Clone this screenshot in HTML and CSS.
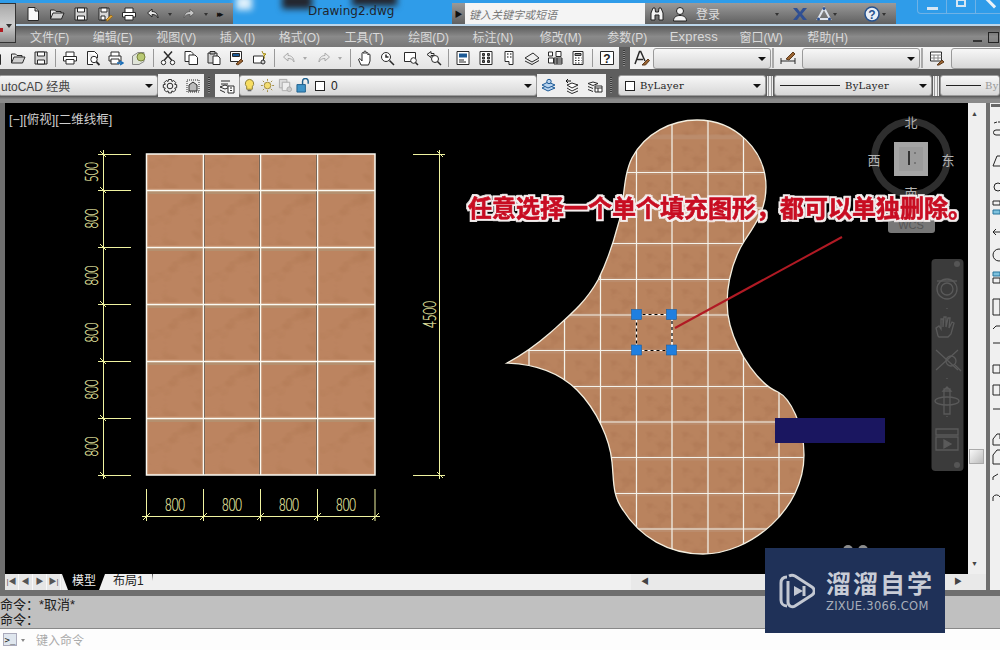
FILE: index.html
```html
<!DOCTYPE html>
<html lang="zh">
<head>
<meta charset="utf-8">
<title>Drawing2.dwg</title>
<link rel="stylesheet" href="styles.css">
</head>
<body>
<svg class="defs" width="0" height="0">
  <defs>
    <g id="i-new"><path d="M3 1.500h7l3.500 3.500v9.500H3z" fill="#fafafa"/><path d="M10 1.500V5h3.500" fill="#bbb"/></g>
    <g id="i-open"><path d="M1.500 13V4h4l1.500 1.500H12V7" fill="#e8e8e8"/><path d="M1.500 13l2.500-6h11l-2.500 6z" fill="#cfcfcf"/></g>
    <g id="i-save"><path d="M2 2h12v12H2z" fill="#d8d8d8"/><path d="M4.500 2h7v4h-7zM4.500 10h7v4h-7z" fill="#fff"/></g>
    <g id="i-saveas"><path d="M2 2h10v12H2z" fill="#d8d8d8"/><path d="M4 2h6v4H4zM4 10h4v4H4z" fill="#fff"/><path d="M9 14l5-5 1.500 1.500-5 4.500z" fill="#e2a93c" stroke="#9a6c1c"/></g>
    <g id="i-print"><path d="M4 6V2h8v4M4 11H1.500V6.500h13V11H12" fill="#fff"/><path d="M4 9.500h8V14H4z" fill="#fff"/></g>
    <g id="i-undo"><path d="M7 3L2.500 7 7 11V8.500c3 0 5 1 6 3.500 0-4-2.500-6.500-6-6.500z" fill="#e6e6e6"/></g>
    <g id="i-redo"><path d="M9 3l4.500 4L9 11V8.500c-3 0-5 1-6 3.500 0-4 2.500-6.500 6-6.500z" fill="#e6e6e6"/></g>
    <g id="i-prev"><path d="M2.500 1.500h7l3 3V8M8 14.500H2.500v-13" fill="#fff"/><circle cx="9" cy="9.500" r="3.200" fill="#fff"/><path d="M11.500 12l3 3" stroke-width="1.800"/></g>
    <g id="i-plot"><path d="M3 6V2h8v4M3 11H1V6h12v5h-2" fill="#fff"/><path d="M3 9h8v5H3z" fill="#fff"/><path d="M9 13h5m-2-2l3 2-3 2" stroke="#1c6fb8" stroke-width="1.500" fill="none"/></g>
    <g id="i-3d"><path d="M1.500 6L7 2.500h6v9L8 14.500H1.500z" fill="#dfe4d8" stroke="#888"/><circle cx="10" cy="7" r="4" fill="#b9c974" stroke="#77823c"/></g>
    <g id="i-cut"><path d="M4 1.500l8 9M12 1.500l-8 9" stroke-width="1.500"/><circle cx="3.500" cy="12.500" r="2.200" fill="#fff"/><circle cx="12.500" cy="12.500" r="2.200" fill="#fff"/></g>
    <g id="i-copy"><path d="M2 1.500h6l2 2v8H2z" fill="#fff"/><path d="M6 5h6l2.500 2.500v7H6z" fill="#fff"/></g>
    <g id="i-paste"><path d="M2 3h9v10H2z" fill="#d4d4d4"/><path d="M4 1.500h5V4H4z" fill="#bbb"/><path d="M7 6h5l2 2v6.500H7z" fill="#fff"/></g>
    <g id="i-match"><path d="M1.500 1.500h11v10h-11z" fill="#fff"/><path d="M3.500 3.500h7v3h-7z" fill="#1c5a96"/><path d="M7 14l5-5 2 2-5 4z" fill="#9a6433" stroke="#5e3b1c"/></g>
    <g id="i-block"><path d="M1.500 6h10v7h-10z" fill="#fff"/><circle cx="11" cy="12" r="2" fill="#ccc"/><path d="M10 1l1 2.500 3 .5-2 2 .5 2.500" fill="#e8cf4a" stroke="#a08a1c"/></g>
    <g id="i-pan"><path d="M4 15l-2.500-5.500 1.500-1L5 11V3.500a1 1 0 012 0V2a1 1 0 012 0v1.500a1 1 0 012 0V5a1 1 0 012 0v6l-1.500 4z" fill="#fff"/></g>
    <g id="i-zr"><circle cx="6" cy="7" r="4.500" fill="#fff"/><path d="M6 4.500V7h2.500M9.500 10.500l4.500 4.500" stroke-width="1.500"/></g>
    <g id="i-zw"><path d="M1.500 2.500h11v9h-11z" fill="#fff"/><circle cx="10.500" cy="10.500" r="2.800" fill="#fff"/><path d="M12.500 12.500l2.500 2.500" stroke-width="1.500"/></g>
    <g id="i-zp"><path d="M5 1.500L1 4.500l4 3V5.500h3V3.500H5z" fill="#eee"/><circle cx="9" cy="9" r="3.500" fill="#fff"/><path d="M11.500 11.500l3.500 3.500" stroke-width="1.500"/></g>
    <g id="i-prop"><path d="M2 1.500h12v13H2z" fill="#fff"/><path d="M4 3.500h8v4H4z" fill="#1c5a96" stroke="none"/><path d="M4 10h5m-5 2h7"/></g>
    <g id="i-dc"><path d="M2 1.500h12v13H2z" fill="#fff"/><path d="M4.500 3.500h2v2h-2zM9.500 3.500h2v2h-2zM4.500 7h2v2h-2zM9.500 7h2v2h-2zM4.500 10.500h2v2h-2zM9.500 10.500h2v2h-2z" fill="#666"/></g>
    <g id="i-pal"><path d="M4 1.500h8v13H8v-3H4z" fill="#fff"/><path d="M6 4h1.500M9 4h1.500M6 7h1.500M9 7h1.500" stroke="#555" stroke-width="1.500"/></g>
    <g id="i-mk"><path d="M1 8l8-5 6 5-7 4z" fill="#eee"/><path d="M1 11l7 3.500 7-4"/></g>
    <g id="i-sheet"><path d="M1.500 2h4v4h-4zM9 1.500h5v5H9zM1.500 8h5v5h-5z" fill="#fff"/><path d="M7 8h8v6H7z" fill="#ddd"/><path d="M7 10h8M7 12h8M10 8v6"/></g>
    <g id="i-calc"><path d="M3 1.500h10v13H3z" fill="#fff"/><path d="M5 3.500h6v2H5z" fill="#999"/><path d="M5 8h1.500M8 8h1.500M11 8h.5M5 10.500h1.500M8 10.500h1.500M11 10.500h.5M5 13h1.500M8 13h1.500M11 13h.5" stroke-width="1.200"/></g>
    <g id="i-help"><path d="M1.500 1.500h13v13h-13z" fill="#fff"/><text x="8" y="12.500" class="help-q">?</text></g>
    <g id="i-tstyle"><path d="M1 14L5.500 1.500h1.200L11 11M3 9.500h6" stroke-width="1.500"/><path d="M8 15l6-6 1.500 1.500-4 4.500z" fill="#9a6433" stroke="#5e3b1c"/></g>
    <g id="i-dstyle"><path d="M1 8v6M15 8v6M1 11h14" stroke-width="1"/><path d="M6 9l7-7 2 2-6 6z" fill="#9a6433" stroke="#5e3b1c"/></g>
    <g id="i-tbl"><path d="M1.500 2h11v9h-11z" fill="#fff"/><path d="M1.500 5h11M1.500 8h11M5 5v6M9 5v6" stroke="#888"/><path d="M8 15l5-5 2 2-5 3z" fill="#9a6433" stroke="#5e3b1c"/></g>
    <g id="i-gear"><circle cx="8" cy="8" r="2.800" fill="none"/><path d="M6.500 1.500h3l.4 2 1.800-1 2 2-1 1.800 2 .4v3l-2 .4 1 1.800-2 2-1.800-1-.4 2h-3l-.4-2-1.800 1-2-2 1-1.800-2-.4v-3l2-.4-1-1.800 2-2 1.800 1z" fill="none"/></g>
    <g id="i-ws"><path d="M2 2h12v12H2z" fill="none" stroke-dasharray="1 1"/><path d="M4 7l4-3 4 3v6H4z" fill="#bbb"/></g>
    <g id="i-layer"><path d="M2 3h9M2 6h7M1 9l5-2 5 2-5 2z" fill="#fff"/><path d="M1 12l5 2.500"/><path d="M9 8h6v7H9z" fill="#fff"/><path d="M11 10h2m-2 2.500h2"/></g>
    <g id="i-bulb"><path d="M8 1.500a4.500 4.500 0 013 7.800V12H5V9.300A4.500 4.500 0 018 1.500z" fill="#f7dd62" stroke="#8a7a2c"/><path d="M6 13.500h4" stroke="#666" stroke-width="1.500"/></g>
    <g id="i-sun"><circle cx="8" cy="8" r="3.500" fill="#f3dd73" stroke="#a08a3c"/><path d="M8 1v2M8 13v2M1 8h2M13 8h2M3 3l1.500 1.500M11.500 11.500L13 13M13 3l-1.500 1.500M3 13l1.500-1.500" stroke="#a08a3c"/></g>
    <g id="i-fr"><path d="M1.500 1.500h8v9h-8z" fill="#ddd" stroke="#aaa"/><path d="M4.500 4.500h8v9h-8z" fill="#eee" stroke="#aaa"/><circle cx="12" cy="12" r="2.500" fill="#ccc" stroke="#aaa"/></g>
    <g id="i-lock"><path d="M1 7h9v8H1z" fill="#3f94c8" stroke="#1e5f8c"/><path d="M7 7V3.500a3 3 0 016 0V6" fill="none" stroke="#1e5f8c" stroke-width="1.500"/></g>
    <g id="i-lc"><path d="M1 10l6-3 7 3-7 3z" fill="#b8d3ee" stroke="#1c5a96"/><path d="M1 7l6-3 7 3-7 3z" fill="#b8d3ee" stroke="#1c5a96"/><circle cx="8" cy="3.500" r="2.200" fill="#b8d3ee" stroke="#1c5a96"/></g>
    <g id="i-lp"><path d="M3 7l5-2 6 2-6 3zM3 10l5 3 6-3M3 13l5 2.500 6-2.500" fill="#fff"/><path d="M7 3H2m2-2L2 3l2 2" stroke="#111"/></g>
    <g id="i-find"><path d="M1 5.500L6 4l5 1.500L6 7.500zM1 8.500l5 2M1 11.500l5 2" fill="#fff"/><path d="M8 8h7v6H8z" fill="#fff"/><path d="M8 10h7M11 10v4"/></g>
    <pattern id="tile-a" patternUnits="userSpaceOnUse" x="146.500" y="133" width="57" height="57">
      <rect width="57" height="57" fill="#c18a66"/>
      <rect y="0" width="57" height="4" fill="#b4906f"/>
      <rect x="2" y="4" width="53" height="51" fill="#bc8460"/>
      <rect x="2" y="4" width="53" height="51" filter="url(#grain)" opacity=".4"/>
    </pattern>
    <pattern id="tile-b" patternUnits="userSpaceOnUse" x="529" y="172" width="35.700" height="35.700">
      <rect width="35.700" height="35.700" fill="#bb8c6c"/>
      <rect x="1" y="3" width="34" height="31" fill="#b9835e"/>
      <rect x="1" y="3" width="34" height="31" filter="url(#grain2)" opacity=".4"/>
    </pattern>
    <filter id="grain" x="0" y="0" width="100%" height="100%" color-interpolation-filters="sRGB">
      <feTurbulence type="fractalNoise" baseFrequency=".04 .06" numOctaves="3" seed="4"/>
      <feColorMatrix values="0 0 0 0 .62  0 0 0 0 .4  0 0 0 0 .25  0 0 0 2 -.9"/>
    </filter>
    <filter id="grain2" x="0" y="0" width="100%" height="100%" color-interpolation-filters="sRGB">
      <feTurbulence type="fractalNoise" baseFrequency=".07 .1" numOctaves="3" seed="9"/>
      <feColorMatrix values="0 0 0 0 .6  0 0 0 0 .38  0 0 0 0 .25  0 0 0 2 -.9"/>
    </filter>
    <filter id="outline" x="-2%" y="-20%" width="104%" height="140%" color-interpolation-filters="sRGB">
      <feMorphology in="SourceAlpha" operator="dilate" radius="1.500" result="wide"/>
      <feFlood flood-color="#f4eeee"/>
      <feComposite in2="wide" operator="in" result="halo"/>
      <feMerge><feMergeNode in="halo"/><feMergeNode in="SourceGraphic"/></feMerge>
    </filter>
  </defs>
</svg>

<div class="app">
  <header class="titlebar">
    <div class="blur-patch"></div>
    <div class="blur-patch patch-b"></div>
    <div class="blur-patch patch-w"></div>
    <div class="app-btn"><span class="app-dot"></span><span class="app-caret"></span></div>
    <div class="qat">
      <svg class="ic" viewBox="0 0 16 16"><use href="#i-new"/></svg>
      <svg class="ic" viewBox="0 0 16 16"><use href="#i-open"/></svg>
      <svg class="ic" viewBox="0 0 16 16"><use href="#i-save"/></svg>
      <svg class="ic" viewBox="0 0 16 16"><use href="#i-saveas"/></svg>
      <svg class="ic" viewBox="0 0 16 16"><use href="#i-print"/></svg>
      <svg class="ic" viewBox="0 0 16 16"><use href="#i-undo"/></svg>
      <span class="caret-s"></span>
      <svg class="ic dim" viewBox="0 0 16 16"><use href="#i-redo"/></svg>
      <span class="caret-s"></span>
      <span class="more">▸▸</span>
    </div>
    <div class="doc-title">Drawing2.dwg</div>
    <div class="infobar">
      <span class="info-arrow">▶</span>
      <div class="search">键入关键字或短语</div>
      <div class="info-tools">
        <svg class="ic-b" viewBox="0 0 16 16"><path d="M2 14V7l2-5h2l.5 4h3L10 2h2l2 5v7h-4V9H6v5z" fill="#f4f4f4" stroke="#222"/></svg>
        <svg class="ic-b" viewBox="0 0 16 16"><circle cx="8" cy="5" r="3.500" fill="#f4f4f4" stroke="#222"/><path d="M1.500 15c0-4 3-5.500 6.500-5.500s6.500 1.500 6.500 5.500z" fill="#f4f4f4" stroke="#222"/></svg>
        <span class="login">登录</span>
        <span class="caret-s login-caret"></span>
        <svg class="ic-b gap-x" viewBox="0 0 16 16"><path d="M1 2h4l3 4 3-4h4l-5 6 5 6h-4l-3-4-3 4H1l5-6z" fill="#2f4f93"/></svg>
        <svg class="ic-b gap-a" viewBox="0 0 16 16"><path d="M8 2l6 11H2z" fill="none" stroke="#dfe5ee" stroke-width="2"/><circle cx="8" cy="2.500" r="1.500" fill="#2b4f8f"/><circle cx="2.500" cy="13" r="1.500" fill="#2b4f8f"/><circle cx="13.500" cy="13" r="1.500" fill="#2b4f8f"/></svg>
        <span class="caret-s"></span>
        <svg class="ic-b gap-b" viewBox="0 0 16 16"><circle cx="8" cy="8" r="7" fill="#e8eef6" stroke="#27528f" stroke-width="1.500"/><text x="8" y="12.500" class="help-b">?</text></svg>
        <span class="caret-s"></span>
      </div>
    </div>
    <div class="winbtns"><span class="wb"><i class="wb-min"></i></span><span class="wb"><i class="wb-max"></i></span><span class="wb wb-x"><i class="wb-cross"></i></span></div>
  </header>

  <nav class="menubar">
    <span>文件(F)</span><span>编辑(E)</span><span>视图(V)</span><span>插入(I)</span><span>格式(O)</span><span class="m1">工具(T)</span><span class="m1">绘图(D)</span><span>标注(N)</span><span class="m3">修改(M)</span><span class="m2">参数(P)</span><span class="m-ex">Express</span><span class="m-w">窗口(W)</span><span class="m1">帮助(H)</span>
    <div class="mdi"><i class="mdi-min"></i><i class="mdi-max"></i></div>
  </nav>

  <div class="toolbar tb1">
    <svg class="ti cut-l" viewBox="0 0 16 16"><use href="#i-new"/></svg>
    <svg class="ti" viewBox="0 0 16 16"><use href="#i-open"/></svg>
    <svg class="ti" viewBox="0 0 16 16"><use href="#i-save"/></svg>
    <i class="sep"></i>
    <svg class="ti" viewBox="0 0 16 16"><use href="#i-print"/></svg>
    <svg class="ti" viewBox="0 0 16 16"><use href="#i-prev"/></svg>
    <svg class="ti" viewBox="0 0 16 16"><use href="#i-plot"/></svg>
    <svg class="ti" viewBox="0 0 16 16"><use href="#i-3d"/></svg>
    <i class="sep"></i>
    <svg class="ti" viewBox="0 0 16 16"><use href="#i-cut"/></svg>
    <svg class="ti" viewBox="0 0 16 16"><use href="#i-copy"/></svg>
    <svg class="ti" viewBox="0 0 16 16"><use href="#i-paste"/></svg>
    <svg class="ti" viewBox="0 0 16 16"><use href="#i-match"/></svg>
    <svg class="ti" viewBox="0 0 16 16"><use href="#i-block"/></svg>
    <i class="sep"></i>
    <svg class="ti off" viewBox="0 0 16 16"><use href="#i-undo"/></svg><span class="caret-t"></span>
    <svg class="ti off" viewBox="0 0 16 16"><use href="#i-redo"/></svg><span class="caret-t"></span>
    <i class="sep"></i>
    <svg class="ti" viewBox="0 0 16 16"><use href="#i-pan"/></svg>
    <svg class="ti" viewBox="0 0 16 16"><use href="#i-zr"/></svg>
    <svg class="ti" viewBox="0 0 16 16"><use href="#i-zw"/></svg>
    <svg class="ti" viewBox="0 0 16 16"><use href="#i-zp"/></svg>
    <i class="sep"></i>
    <svg class="ti" viewBox="0 0 16 16"><use href="#i-prop"/></svg>
    <svg class="ti" viewBox="0 0 16 16"><use href="#i-dc"/></svg>
    <svg class="ti" viewBox="0 0 16 16"><use href="#i-pal"/></svg>
    <svg class="ti" viewBox="0 0 16 16"><use href="#i-mk"/></svg>
    <svg class="ti" viewBox="0 0 16 16"><use href="#i-sheet"/></svg>
    <svg class="ti" viewBox="0 0 16 16"><use href="#i-calc"/></svg>
    <i class="sep"></i>
    <svg class="ti" viewBox="0 0 16 16"><use href="#i-help"/></svg>
    <span class="grip grip-a"></span>
    <div class="tgroup tg-a"><svg class="ti" viewBox="0 0 16 16"><use href="#i-tstyle"/></svg></div>
    <div class="combo c-text"><b class="arrow"></b></div>
    <i class="vdiv"></i>
    <svg class="ti ti-s" viewBox="0 0 16 16"><use href="#i-dstyle"/></svg>
    <div class="combo c-text"><b class="arrow"></b></div>
    <i class="vdiv"></i>
    <svg class="ti ti-s" viewBox="0 0 16 16"><use href="#i-tbl"/></svg>
    <div class="combo c-rest"></div>
  </div>

  <div class="toolbar tb2">
    <div class="combo c-ws"><span class="ws-name">utoCAD 经典</span><b class="arrow"></b></div>
    <div class="tgroup">
      <svg class="ti" viewBox="0 0 16 16"><use href="#i-gear"/></svg>
      <svg class="ti" viewBox="0 0 16 16"><use href="#i-ws"/></svg>
    </div>
    <span class="grip grip-b"></span>
    <div class="tgroup tg-l"><svg class="ti" viewBox="0 0 16 16"><use href="#i-layer"/></svg></div>
    <div class="combo c-layer">
      <svg class="st" viewBox="0 0 16 16"><use href="#i-bulb"/></svg>
      <svg class="st" viewBox="0 0 16 16"><use href="#i-sun"/></svg>
      <svg class="st" viewBox="0 0 16 16"><use href="#i-fr"/></svg>
      <svg class="st" viewBox="0 0 16 16"><use href="#i-lock"/></svg>
      <i class="swatch"></i><span class="layer-name">0</span>
      <b class="arrow"></b>
    </div>
    <div class="tgroup">
      <svg class="ti" viewBox="0 0 16 16"><use href="#i-lc"/></svg>
      <svg class="ti" viewBox="0 0 16 16"><use href="#i-lp"/></svg>
      <svg class="ti" viewBox="0 0 16 16"><use href="#i-find"/></svg>
    </div>
    <span class="grip grip-c"></span>
    <div class="combo c-by1"><i class="swatch"></i><span class="by">ByLayer</span><b class="arrow"></b></div>
    <i class="vdiv dbl"></i>
    <div class="combo c-by2"><i class="ln"></i><span class="by">ByLayer</span><b class="arrow"></b></div>
    <i class="vdiv dbl"></i>
    <div class="combo c-by3"><i class="ln ln-s"></i><span class="by by-dim">ByL</span></div>
  </div>

  <div class="frame-top"></div>

  <div class="workspace">
    <div class="main">
      <div class="canvas-row">
        <div class="canvas">
          <span class="viewlabel">[−][俯视][二维线框]</span>
          <svg class="drawing" viewBox="5 103 963 471" width="963" height="471">
            <g class="left-draw">
              <rect x="146.500" y="154" width="228.500" height="321" fill="url(#tile-a)"/>
              <path class="bl" d="M259.500 154V475M316.500 154V475M204.500 154V475"/>
              <path class="wl wl-a" d="M146.500 154H375V475H146.500ZM203.500 154V475M260.500 154V475M317.500 154V475M146.500 190.500H375M146.500 247.500H375M146.500 304.500H375M146.500 361.500H375M146.500 418.500H375"/>
            </g>
            <g class="dims">
              <path d="M103.500 150V479M98 154.500h33M98 190.500h33M98 247.500h33M98 304.500h33M98 361.500h33M98 418.500h33M98 475.500h33"/>
              <path d="M100 151l6 6M100 187l6 6M100 244l6 6M100 301l6 6M100 358l6 6M100 415l6 6M100 472l6 6"/>
              <path d="M439.500 150V479M413 154.500h32M413 475.500h32M437 151l6 6M437 472l6 6"/>
              <path d="M142 516.500H380M146.500 489v32M203.500 489v32M260.500 489v32M317.500 489v32M375 489v32"/>
              <path d="M143 520l7-7M200 520l7-7M257 520l7-7M314 520l7-7M372 520l7-7"/>
            </g>
            <g class="dimtext">
              <text transform="translate(98 172) rotate(-90)" textLength="20" lengthAdjust="spacingAndGlyphs">500</text>
              <text transform="translate(98 218.500) rotate(-90)" textLength="20" lengthAdjust="spacingAndGlyphs">800</text>
              <text transform="translate(98 275.500) rotate(-90)" textLength="20" lengthAdjust="spacingAndGlyphs">800</text>
              <text transform="translate(98 332.500) rotate(-90)" textLength="20" lengthAdjust="spacingAndGlyphs">800</text>
              <text transform="translate(98 389.500) rotate(-90)" textLength="20" lengthAdjust="spacingAndGlyphs">800</text>
              <text transform="translate(98 446.500) rotate(-90)" textLength="20" lengthAdjust="spacingAndGlyphs">800</text>
              <text transform="translate(436 314.500) rotate(-90)" textLength="27" lengthAdjust="spacingAndGlyphs">4500</text>
              <text x="175" y="511" textLength="20" lengthAdjust="spacingAndGlyphs">800</text>
              <text x="232" y="511" textLength="20" lengthAdjust="spacingAndGlyphs">800</text>
              <text x="289" y="511" textLength="20" lengthAdjust="spacingAndGlyphs">800</text>
              <text x="346" y="511" textLength="20" lengthAdjust="spacingAndGlyphs">800</text>
            </g>

            <path class="blob" d="M697 120C672 120 645 133 632 158C622 178 625 205 618 225C612 248 607 262 598 280C586 302 570 315 550 333C535 346 522 355 507 363C535 364 560 373 577 390C597 410 610 440 612 462C614 480 612 495 623 510C640 537 668 554 703 554C750 554 804 510 804 455C804 425 790 398 778 392C760 385 738 355 730 325C722 295 732 260 745 240C755 225 766 210 766 187C766 150 735 120 697 120Z"/>
            <clipPath id="blob-clip"><path d="M697 120C672 120 645 133 632 158C622 178 625 205 618 225C612 248 607 262 598 280C586 302 570 315 550 333C535 346 522 355 507 363C535 364 560 373 577 390C597 410 610 440 612 462C614 480 612 495 623 510C640 537 668 554 703 554C750 554 804 510 804 455C804 425 790 398 778 392C760 385 738 355 730 325C722 295 732 260 745 240C755 225 766 210 766 187C766 150 735 120 697 120Z"/></clipPath>
            <path class="wl" clip-path="url(#blob-clip)" d="M529 110V560M564.500 110V560M600.500 110V560M636.500 110V560M672 110V560M708 110V560M743.500 110V560M779 110V560M500 172.500H810M500 208H810M500 243.500H810M500 279.500H810M500 315H810M500 350.500H810M500 386.500H810M500 422H810M500 457.500H810M500 493.500H810M500 529H810"/>

            <path class="sel-solid" d="M636.500 314.500H672V350.500H636.500Z"/>
            <path class="sel-dash" d="M636.500 314.500H672V350.500H636.500Z"/>
            <g class="grips">
              <rect x="631.500" y="309.500" width="10" height="10"/>
              <rect x="666.500" y="309.500" width="10" height="10"/>
              <rect x="631.500" y="345" width="10" height="10"/>
              <rect x="666.500" y="345" width="10" height="10"/>
            </g>

            <rect class="navy" x="775" y="418" width="110" height="25"/>
            <path class="leader" d="M675 328L842 237"/>

            <g class="viewcube">
              <circle cx="911" cy="158" r="36.500"/>
              <rect x="894" y="142" width="34" height="34"/>
              <rect class="cube-in" x="899" y="147" width="24" height="24"/>
              <path d="M909 151v14" class="cube-k"/>
              <path d="M914 153h2M914 163h2" class="cube-g"/>
              <text x="911" y="127">北</text><text x="874" y="165">西</text><text x="948" y="165">东</text><text x="911" y="198">南</text>
            </g>
            <rect class="wcs" x="888" y="218" width="47" height="15" rx="3"/>
            <text class="wcs-t" x="911" y="229">WCS</text>
            <text class="callout" x="468" y="217">任意选择一个单个填充图形，都可以单独删除。</text>

            <g class="navbar">
              <rect x="931.500" y="259" width="32" height="212" rx="4"/>
              <circle class="nb-dot" cx="957" cy="264" r="3"/>
              <circle class="nb-dot" cx="957" cy="465" r="3"/>
              <g class="nb-ic">
                <circle cx="947" cy="289" r="10"/><circle cx="947" cy="289" r="6"/><path d="M937 281h20"/>
                <path d="M938 336l-2-8 3-2 2 3 0-10 2 0 0 8 1-10 2 0 0 10 2-9 2 0-1 10 3-6 2 1-3 11-3 3h-9z"/>
                <path d="M936 350l22 20M958 350l-22 20"/><circle cx="951" cy="361" r="5"/><path d="M955 365l6 6"/>
                <path d="M944 389h6v25h-6zM947 387l-4 4h8z"/><ellipse cx="947" cy="401" rx="12" ry="4"/>
                <path d="M936 429h22v6h-22zM936 437h22v13h-22z"/><path class="nb-fill" d="M944 440l7 4-7 4z"/>
                <path d="M947 308v1M947 378v1M947 416v1"/>
              </g>
            </g>
            <circle class="nb-mark" cx="848" cy="550" r="5"/><circle class="nb-mark" cx="863" cy="550" r="5"/>
          </svg>
        </div>
        <div class="vscroll"><span class="up">▲</span><span class="thumb"></span><span class="dn">▼</span></div>
      </div>
      <div class="tabrow">
        <div class="tabnav"><span>|◀</span><span>◀</span><span>▶</span><span>▶|</span></div>
        <span class="tab active">模型</span>
        <span class="tab">布局1</span>
        <span class="tab-fill"></span>
        <div class="hscroll"><span>◀</span><span>▶</span></div>
      </div>
    </div>
    <aside class="dock">
      <svg viewBox="0 0 10 487" width="10" height="487">
        <path class="dg" d="M1 1h9v3H1z"/>
        <g class="ds">
          <path d="M4 20l3-1"/><path d="M8 19h2" stroke="#a5683a"/><path d="M10 27H6a2 2 0 000 5h4"/>
          <path d="M3 63l4-10h3M3 63h7"/><circle cx="8" cy="84" r="4"/><path d="M3 98h7v4H3z"/><path class="df" d="M3 107h7v4H3z"/>
          <path d="M3 129h7m-7 0l3-3m-3 3l3 3"/><circle cx="9" cy="152" r="6"/><path class="df" d="M3 169h7v4H3z"/><path d="M3 175h7v5H3z"/>
          <path d="M3 196h7v16H3z"/><path d="M3 226l3-3h4" stroke="#1c6fb8"/><path d="M3 240h7"/><path d="M3 262h7v8H3z"/><path d="M3 282h7v10H3z"/><path d="M3 306h7" stroke="#1c6fb8"/>
          <path d="M3 336l4-5h3v5M3 336v6h7"/><path d="M3 352l4-5h3M3 352v9h7"/><path d="M3 377v-3l5-3"/><path d="M3 398v-4a4 4 0 017 0" stroke="#1c6fb8"/>
        </g>
      </svg>
    </aside>
  </div>

  <div class="bar-sep"></div>
  <section class="cmd">
    <div>命令：*取消*</div>
    <div>命令：</div>
  </section>
  <div class="cmd-input">
    <span class="prompt">&gt;_</span><span class="caret-s cmd-caret"></span>
    <span class="cmd-ph">键入命令</span>
  </div>

  <aside class="watermark">
    <svg class="wm-logo" viewBox="0 0 36 36" width="36" height="36">
      <path d="M8 4C4 4 2 6 2 10v17c0 3 2 6 6 6" />
      <path d="M10 3c2-1 4-1 6 0l17 11c3 2 3 6 0 8L16 33c-3 2-7 0-7-4V8" />
      <path class="wm-f" d="M15 13l9 5-9 5z"/><path d="M25 13v10"/>
    </svg>
    <div class="wm-text">
      <div class="wm-cn">溜溜自学</div>
      <div class="wm-en">ZIXUE.3066.COM</div>
    </div>
  </aside>
</div>
</body>
</html>
```
FILE: styles.css
```css
* { box-sizing: border-box; }
html, body { margin: 0; padding: 0; }
body { width: 1000px; height: 650px; overflow: hidden; background: #000; font-family: "Liberation Sans", "Noto Sans CJK SC", sans-serif; }
.defs { position: absolute; }
.app { position: relative; width: 1000px; height: 650px; display: flex; flex-direction: column; overflow: hidden; }

/* title bar */
.titlebar { position: relative; height: 26px; flex: none; display: flex; align-items: flex-start; padding-top: 3px; background: #2f9ce9; border-bottom: 2px solid #bcd6ea; overflow: hidden; }
.blur-patch { position: absolute; left: 282px; top: -6px; width: 30px; height: 15px; background: #24262e; filter: blur(3px); }
.patch-b { left: 352px; top: -8px; width: 45px; height: 14px; }
.patch-w { left: 236px; top: -4px; width: 16px; height: 14px; background: #dff0fb; }
.app-btn { position: fixed; left: 0; top: 3px; width: 16px; height: 40px; background: linear-gradient(#a8a8a8, #cfcfcf 55%, #8e8e8e); border: 1px solid #333; border-left: 0; z-index: 3; }
.app-dot { position: absolute; left: 0; top: 24px; width: 3px; height: 4px; background: #b01a20; }
.app-caret { position: absolute; left: 6px; top: 20px; border: 3.500px solid transparent; border-top: 4px solid #333; }
.qat { position: relative; margin-left: 16px; width: 217px; height: 22px; flex: none; display: flex; align-items: center; padding-left: 9px; background: linear-gradient(#929292, #5f5f5f); }
.ic { width: 16px; height: 16px; margin-right: 8px; fill: none; stroke: #262626; stroke-width: 1; flex: none; }
.ic.dim { stroke: #555; opacity: .7; }
.caret-s { display: inline-block; flex: none; width: 0; height: 0; border: 2.500px solid transparent; border-top: 3px solid #333; margin: 3px 9px 0 -1px; }
.more { font-size: 9px; letter-spacing: -3px; color: #111; }
.doc-title { position: relative; width: 219px; flex: none; padding: 1px 0 0 75px; font: 12px "DejaVu Sans", sans-serif; color: #20252c; line-height: 14px; }
.infobar { position: relative; width: 444px; flex: none; height: 21px; display: flex; align-items: center; background: linear-gradient(#9a9a9a, #606060); }
.info-arrow { width: 13px; font-size: 8px; text-align: center; color: #111; }
.search { width: 180px; height: 21px; background: #f4f4f4; padding: 2px 0 0 4px; font-size: 11px; font-style: italic; color: #777; line-height: 20px; }
.info-tools { flex: 1; display: flex; align-items: center; padding-left: 4px; }
.ic-b { width: 16px; height: 16px; margin-right: 7px; flex: none; }
.login { font-size: 12px; color: #ddd; margin-left: 1px; width: 80px; flex: none; }
.login-caret { margin-right: 9px; }
.gap-x { margin-left: 4px; }
.gap-a { margin-left: 1px; margin-right: 2px; }
.gap-b { margin-left: 18px; margin-right: 3px; }
.winbtns { display: flex; flex: none; margin-left: 21px; margin-top: -4px; height: 15px; border: 1px solid #6fb2e6; border-top: 0; border-radius: 0 0 4px 4px; width: 90px; }
.wb { width: 29px; flex: none; border-right: 1px solid #6fb2e6; position: relative; }
.wb-min { position: absolute; left: 9px; bottom: 3px; width: 11px; height: 3px; background: #d6e6f3; }
.wb-max { position: absolute; left: 9px; top: 0; width: 10px; height: 8px; border: 2px solid #d6e6f3; }
.wb-x { border-right: 0; }
.wb-cross { position: absolute; left: 8px; top: -2px; width: 13px; height: 3px; background: #eaf2f8; transform: rotate(45deg) translate(3px, 3px); }

/* menu */
.menubar { position: relative; height: 21px; flex: none; display: flex; align-items: center; gap: 23.500px; padding-left: 30px; background: linear-gradient(#5a5a5a, #8a8a8a 50%, #777); color: #d9d9d9; font-size: 12px; white-space: nowrap; }
.m1 { margin-left: 1px; }
.m2 { margin-left: 2px; }
.m3 { margin-left: 3px; }
.m-w { margin-left: -2px; }
.m-ex { font-size: 13px; letter-spacing: .2px; margin-left: -1px; }
.mdi { position: absolute; right: 0; top: 6px; display: flex; gap: 6px; align-items: center; }
.mdi-min { width: 9px; height: 2px; background: #333; margin-top: 6px; }
.mdi-max { width: 11px; height: 11px; border: 1.500px solid #222; margin-right: 1px; }

/* toolbars */
.toolbar { flex: none; display: flex; align-items: center; overflow: hidden; white-space: nowrap; }
.tb1 { height: 24px; background: linear-gradient(#f6f6f6, #e4e4e4); border-bottom: 2px solid #5e5e5e; }
.tb2 { height: 26px; background: #5e5e5e; padding-top: 3px; }
.ti { width: 16px; height: 16px; flex: none; fill: none; stroke: #2a2a2a; stroke-width: 1; margin: 0 3.500px; overflow: hidden; }
.ti.off { opacity: .35; }
.ti.cut-l { margin-left: -13px; }
.ti.ti-s { margin: 0 6px 0 0; }
.sep { flex: none; width: 1px; height: 18px; background: #999; margin: 0 2.500px; }
.caret-t { flex: none; width: 0; height: 0; border: 2.500px solid transparent; border-top: 3px solid #aaa; margin: 3px 6px 0 2px; }
.tgroup { flex: none; display: flex; align-items: center; align-self: stretch; background: #efefef; }
.tg-a { background: #f2f2f2; }
.tg-l { width: 24px; }
.grip { flex: none; align-self: stretch; background: #5e5e5e repeating-linear-gradient(#3a3a3a 0 1px, #8a8a8a 1px 2px) 4px 3px / 2px 16px no-repeat; }
.grip-a { width: 11.500px; }
.grip-b { width: 11px; }
.grip-c { width: 12px; }
.combo { position: relative; flex: none; display: flex; align-items: center; height: 21px; border: 1px solid #9a9a9a; border-radius: 3px; background: linear-gradient(#f7f7f7, #d7d7d7); color: #222; font-size: 11px; overflow: hidden; }
.arrow { position: absolute; right: 4px; top: 8px; border: 4px solid transparent; border-top: 4px solid #111; border-bottom: 0; }
.c-text { width: 118px; }
.c-rest { width: 60px; }
.vdiv { flex: none; width: 2px; height: 20px; background: #aaa; margin: 0 6px 0 1px; }
.vdiv.dbl { width: 6px; background: linear-gradient(90deg, #eee 0 1px, #999 1px 2px, #eee 2px 4px, #999 4px 5px, #eee 5px); margin: 0 1px; }
.c-ws { width: 160px; margin-left: -2px; padding-left: 2px; font-size: 12px; color: #444; }
.c-layer { width: 298px; padding-left: 2px; }
.st { width: 15px; height: 15px; flex: none; margin-right: 3px; stroke: #333; fill: none; }
.swatch { flex: none; width: 10px; height: 10px; background: #fff; border: 1px solid #222; margin: 0 5px 0 1px; }
.layer-name { font-size: 12px; color: #222; margin-left: 1px; }
.c-by1 { width: 148px; padding-left: 5px; }
.c-by2 { width: 158px; padding-left: 5px; }
.c-by3 { width: 60px; padding-left: 5px; }
.by { font: 10px "DejaVu Serif", serif; letter-spacing: .3px; }
.by-dim { color: #999; margin-left: 4px; }
.ln { flex: none; width: 60px; height: 1px; background: #222; margin-right: 5px; }
.ln-s { width: 35px; margin-right: 0; }

.frame-top { height: 6px; flex: none; background: linear-gradient(#6a6a6a, #8a8a8a 40%, #8a8a8a); }

/* workspace */
.workspace { height: 487px; flex: none; display: flex; background: #6f6f6f; }
.main { width: 986px; flex: none; padding-left: 5px; display: flex; flex-direction: column; }
.canvas-row { height: 471px; flex: none; display: flex; }
.canvas { position: relative; width: 963px; height: 471px; flex: none; background: #000; overflow: hidden; }
.drawing { display: block; }
.viewlabel { position: absolute; left: 4px; top: 6px; font-size: 12.500px; color: #cfcfcf; z-index: 1; white-space: nowrap; }
.vscroll { position: relative; width: 18px; background: #efefef; }
.vscroll .up, .vscroll .dn { position: absolute; left: 3px; font-size: 7px; color: #444; line-height: 8px; }
.vscroll .up { top: 7px; }
.vscroll .dn { bottom: 6px; }
.thumb { position: absolute; left: 1px; top: 346px; width: 15px; height: 15px; background: linear-gradient(135deg, #f8f8f8, #bcbcbc); border: 1px solid #aaa; }

.tabrow { height: 16px; flex: none; display: flex; align-items: stretch; background: #f0f0f0; font-size: 12px; color: #222; }
.tabnav { display: flex; width: 57px; flex: none; background: #e6e6e6; }
.tabnav span { width: 14px; font-size: 8px; line-height: 16px; text-align: center; color: #555; border-right: 1px solid #f8f8f8; white-space: nowrap; }
.tab { flex: none; padding: 0 10px; line-height: 15px; white-space: nowrap; }
.tab.active { background: #000; color: #eee; width: 43px; padding: 0 10px; clip-path: polygon(0 0, 100% 0, 86% 100%, 14% 100%); }
.tab:not(.active) { width: 48px; padding-left: 8px; clip-path: polygon(0 0, 100% 0, 95% 100%, 0 100%); border-right: 1px solid #555; }
.tab-fill { width: 478px; flex: none; }
.hscroll { flex: 1; display: flex; justify-content: space-between; padding: 0 24px 0 10px; font-size: 8px; line-height: 16px; color: #444; background: #e9e9e9; }

.dock { width: 14px; flex: none; background: linear-gradient(90deg, #6f6f6f 0 4px, #f0f0f0 4px); display: flex; justify-content: flex-end; }
.dg { fill: #666; }
.ds path, .ds circle { fill: none; stroke: #222; stroke-width: 1; }
.ds .df { fill: #7ec2de; stroke: #27759c; }

/* drawing */
.wl { fill: none; stroke: #f4f2ea; stroke-width: 1.200; }
.wl-a { stroke: #fbfaf2; stroke-width: 1.500; }
.bl { fill: none; stroke: #1a120c; stroke-width: 1; opacity: .7; }
.dims path { fill: none; stroke: #f0f3a0; stroke-width: 1; }
.dimtext text { fill: #f0f2ae; stroke: #f0f2ae; stroke-width: .2; font: 300 17px "Lato", sans-serif; text-anchor: middle; }
.blob { fill: url(#tile-b); stroke: #f4efe0; stroke-width: 1.300; }
.sel-solid { fill: none; stroke: #fff; stroke-width: 1.200; }
.sel-dash { fill: none; stroke: #000; stroke-width: 1.200; stroke-dasharray: 3 3; }
.grips rect { fill: #1f7fe0; stroke: #1c5fa0; stroke-width: .6; }
.navy { fill: #1a1660; }
.leader { stroke: #b01a24; stroke-width: 2; fill: none; }
.viewcube circle { fill: none; stroke: #2e2e2e; stroke-width: 7; }
.viewcube rect { fill: #a5a5a5; }
.viewcube .cube-in { fill: #9c9c9c; }
.cube-k { stroke: #333; stroke-width: 2; }
.cube-g { stroke: #555; stroke-width: 1; }
.viewcube text { fill: #b4b4b4; font-size: 13px; text-anchor: middle; }
.wcs { fill: #777; }
.wcs-t { fill: #555; font-size: 11px; text-anchor: middle; }
.callout { fill: #c80d22; stroke: #c80d22; stroke-width: .6; stroke-linejoin: round; font: 700 24px "Noto Sans CJK SC", sans-serif; filter: url(#outline); }
.navbar > rect { fill: #3b3b3b; }
.nb-dot { fill: #555; }
.nb-ic path, .nb-ic circle, .nb-ic ellipse { fill: none; stroke: #5a5a5a; stroke-width: 1.300; }
.nb-ic .nb-fill { fill: #5a5a5a; }
.nb-mark { fill: #8d8d8d; }

/* command */
.bar-sep { height: 6px; flex: none; background: #6f6f6f; }
.cmd { height: 33px; flex: none; padding-top: 1px; background: #c0c0c0; border-bottom: 1px solid #888; font-size: 13px; line-height: 15px; color: #1c1c1c; }
.cmd-input { height: 21px; flex: none; display: flex; align-items: center; padding-left: 3px; background: #fdfdfd; }
.prompt { width: 14px; height: 13px; font: 9px/12px "DejaVu Sans Mono", monospace; background: #dfe6ee; border: 1px solid #aab; color: #222; text-align: center; }
.cmd-caret { border-top-color: #888; margin: 3px 0 0 4px; }
.cmd-ph { margin-left: 11px; font-size: 12px; color: #aaa; }

/* watermark */
.watermark { position: absolute; left: 765px; top: 548px; width: 180px; height: 85px; display: flex; align-items: center; padding: 0 0 0 14px; gap: 11px; background: #1f3158; z-index: 5; }
.wm-logo { fill: none; stroke: #c3c8d2; stroke-width: 3; flex: none; }
.wm-logo .wm-f { fill: #c3c8d2; stroke: none; }
.wm-cn { font: 700 25px/28px "Noto Sans CJK SC", sans-serif; letter-spacing: 2px; color: #c8ccd6; white-space: nowrap; }
.wm-en { font: 11.500px/14px "DejaVu Sans", sans-serif; letter-spacing: .3px; color: #a8aeba; margin-top: 3px; white-space: nowrap; }
.help-q { font: 700 12px "Liberation Sans", sans-serif; text-anchor: middle; fill: #222; stroke: none; }
.help-b { font: 700 12px "Liberation Sans", sans-serif; text-anchor: middle; fill: #27528f; }
```
